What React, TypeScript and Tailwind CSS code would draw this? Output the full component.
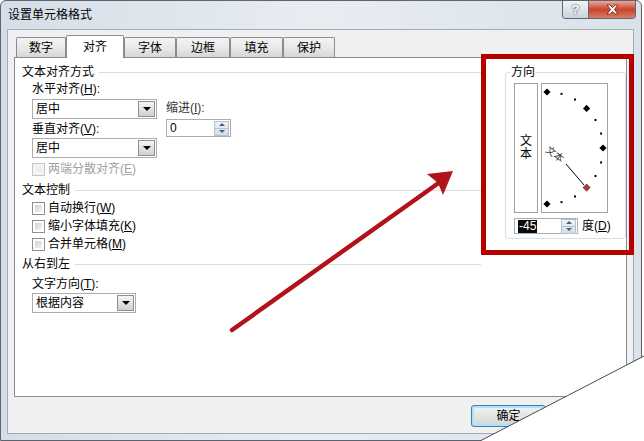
import React from 'react'

const TABS: { label: string; width: string; active?: boolean }[] = [
  { label: '数字', width: 'w-[50px]' },
  { label: '对齐', width: 'w-[58px]', active: true },
  { label: '字体', width: 'w-[52px]' },
  { label: '边框', width: 'w-[54px]' },
  { label: '填充', width: 'w-[53px]' },
  { label: '保护', width: 'w-[52px]' },
]

const DIAL_ANGLES = [90, 75, 60, 45, 30, 15, 0, -15, -30, -45, -60, -75, -90]

function Key({ k }: { k: string }) {
  return (
    <>
      (<span className="underline">{k}</span>)
    </>
  )
}

function GroupHeader({ label, className = '' }: { label: string; className?: string }) {
  return (
    <div className={`flex h-[14px] items-center ${className}`}>
      <span className="leading-[14px]">{label}</span>
      <div className="ml-[5px] h-px flex-1 bg-[#dcdcdc]" />
    </div>
  )
}

function Combo({ value, className = '' }: { value: string; className?: string }) {
  return (
    <div className={`flex h-[20px] items-center border border-[#abadb3] bg-white ${className}`}>
      <span className="flex-1 pl-[3px] leading-[14px]">{value}</span>
      <div className="mr-px flex h-[16px] w-[17px] items-center justify-center border border-[#8e8f8f] bg-gradient-to-b from-[#f6f6f6] to-[#cfcfcf]">
        <div className="h-0 w-0 border-x-[4px] border-t-[4px] border-x-transparent border-t-black" />
      </div>
    </div>
  )
}

function SpinButtons() {
  return (
    <div className="mr-px flex h-[15px] w-[15px] flex-col border border-[#b6c2cf] bg-gradient-to-b from-[#eef3f8] to-[#d3dde8]">
      <div className="flex flex-1 items-center justify-center border-b border-[#b6c2cf]">
        <div className="h-0 w-0 border-x-[3px] border-b-[3px] border-x-transparent border-b-[#4b5f80]" />
      </div>
      <div className="flex flex-1 items-center justify-center">
        <div className="h-0 w-0 border-x-[3px] border-t-[3px] border-x-transparent border-t-[#4b5f80]" />
      </div>
    </div>
  )
}

function CheckBox({ children, disabled }: { children: React.ReactNode; disabled?: boolean }) {
  return (
    <div className="flex h-[18px] items-center">
      <div
        className={`h-[13px] w-[13px] border p-[2px] ${
          disabled ? 'border-[#c5c5c5] bg-[#f4f4f4]' : 'border-[#8e8f8f] bg-white'
        }`}
      >
        <div
          className={`h-full w-full ${
            disabled ? 'bg-[#f0f0f0]' : 'bg-gradient-to-br from-[#cfd2d6] to-[#f4f4f4]'
          }`}
        />
      </div>
      <span className={`ml-[3px] leading-[14px] ${disabled ? 'text-[#a0a0a0]' : ''}`}>{children}</span>
    </div>
  )
}

function Dial() {
  const cx = 5
  const cy = 64
  const r = 56
  return (
    <div className="h-[130px] w-[67px] border border-[#a0a0a0] bg-white">
      <svg width="65" height="128" viewBox="0 0 65 128">
        {DIAL_ANGLES.map((a) => {
          const x = cx + r * Math.cos((a * Math.PI) / 180)
          const y = cy - r * Math.sin((a * Math.PI) / 180)
          if (a % 45 === 0) {
            const s = 3.6
            return (
              <polygon
                key={a}
                points={`${x},${y - s} ${x + s},${y} ${x},${y + s} ${x - s},${y}`}
                fill={a === -45 ? '#b03a3a' : '#000'}
                stroke={a === -45 ? '#5a1010' : 'none'}
                strokeWidth="0.6"
              />
            )
          }
          return <rect key={a} x={x - 1} y={y - 1} width="2" height="2" fill="#000" />
        })}
        <line x1="24" y1="80" x2="42" y2="101" stroke="#000" strokeWidth="1" />
        <text
          x="5"
          y="68"
          fontSize="10"
          fill="#404040"
          transform="rotate(36 5 64)"
          fontFamily="'Noto Sans CJK SC', sans-serif"
        >
          文本
        </text>
      </svg>
    </div>
  )
}

export default function App() {
  return (
    <div className="relative h-[441px] w-[644px] overflow-hidden bg-white font-['Liberation_Sans','Noto_Sans_CJK_SC',sans-serif] text-[12px] text-black">
      {/* window */}
      <div className="flex h-[441px] w-[642px] flex-col rounded-t-[6px] border border-[#5b6470] bg-gradient-to-r from-[#d5dee8] via-[#e8edf2] to-[#d9e1ea]">
        <div className="flex h-[28px] items-start">
          <span className="ml-[7px] mt-[7px] text-[12px] leading-[14px]">设置单元格格式</span>
          <div className="ml-auto mr-[5px] flex h-[18px] overflow-hidden rounded-b-[4px] border border-t-0 border-[#5f6874]">
            <div className="flex w-[26px] items-center justify-center border-r border-[#5f6874] bg-gradient-to-b from-[#f1f4f7] via-[#dfe5eb] to-[#c9d2dc]">
              <span className="text-[13px] font-bold leading-none text-white drop-shadow-[0_0_1px_#2e3640]">?</span>
            </div>
            <div className="flex w-[46px] items-center justify-center bg-gradient-to-b from-[#e9a898] via-[#c8422c] to-[#d87b63]">
              <svg width="13" height="11" viewBox="0 0 13 11">
                <path
                  d="M1 1 L4 1 L6.5 3.6 L9 1 L12 1 L8.3 5.5 L12 10 L9 10 L6.5 7.4 L4 10 L1 10 L4.7 5.5 Z"
                  fill="#fff"
                  stroke="#5a2018"
                  strokeWidth="0.8"
                />
              </svg>
            </div>
          </div>
        </div>

        {/* client area */}
        <div className="ml-[6px] flex h-[405px] w-[627px] flex-col border border-[#a3adb8] bg-[#f0f0f0] px-[6px] pb-[6px] pt-[5px]">
          <div className="relative z-10 -mb-px ml-[2px] flex h-[23px] items-end">
            {TABS.map((t) =>
              t.active ? (
                <div
                  key={t.label}
                  className={`${t.width} flex h-[23px] items-center justify-center rounded-t-[2px] border border-b-0 border-[#898c95] bg-white leading-[14px]`}
                >
                  {t.label}
                </div>
              ) : (
                <div
                  key={t.label}
                  className={`${t.width} mb-px flex h-[20px] items-center justify-center rounded-t-[2px] border border-b-0 border-[#898c95] bg-gradient-to-b from-[#f4f4f4] via-[#e9e9e9] to-[#d6d6d6] leading-[14px]`}
                >
                  {t.label}
                </div>
              ),
            )}
          </div>

          <div className="flex h-[340px] border border-[#898c95] bg-white pl-[7px] pt-[7px]">
            {/* left column */}
            <div className="flex w-[459px] flex-col">
              <GroupHeader label="文本对齐方式" />
              <div className="ml-[10px] mt-[3px] flex">
                <div className="flex w-[125px] flex-col">
                  <span className="leading-[14px]">
                    水平对齐<Key k="H" />:
                  </span>
                  <Combo value="居中" className="mt-[3px]" />
                  <span className="mt-[3px] leading-[14px]">
                    垂直对齐<Key k="V" />:
                  </span>
                  <Combo value="居中" className="mt-[2px]" />
                  <div className="mt-[2px]">
                    <CheckBox disabled>
                      两端分散对齐<Key k="E" />
                    </CheckBox>
                  </div>
                </div>
                <div className="ml-[9px] flex flex-col">
                  <span className="mt-[19px] leading-[14px] text-[#333]">
                    缩进<Key k="I" />:
                  </span>
                  <div className="mt-[4px] flex h-[18px] w-[65px] items-center border border-[#abadb3] bg-white">
                    <span className="flex-1 pl-[3px] leading-[14px]">0</span>
                    <SpinButtons />
                  </div>
                </div>
              </div>

              <GroupHeader label="文本控制" className="mt-[5px]" />
              <div className="ml-[10px] mt-[2px] flex flex-col">
                <CheckBox>
                  自动换行<Key k="W" />
                </CheckBox>
                <CheckBox>
                  缩小字体填充<Key k="K" />
                </CheckBox>
                <CheckBox>
                  合并单元格<Key k="M" />
                </CheckBox>
              </div>

              <GroupHeader label="从右到左" className="mt-[4px]" />
              <div className="ml-[10px] mt-[6px] flex flex-col">
                <span className="leading-[14px]">
                  文字方向<Key k="T" />:
                </span>
                <Combo value="根据内容" className="mt-[2px] w-[104px]" />
              </div>
            </div>

            {/* right column */}
            <fieldset className="ml-[24px] w-[121px] self-start rounded-[3px] border border-[#d5dfe5] pb-[4px] pl-[8px]">
              <legend className="-ml-[4px] px-[1px] leading-[14px]">方向</legend>
              <div className="mt-[4px] flex gap-[3px]">
                <div className="flex h-[130px] w-[24px] flex-col items-center justify-center border border-[#a0a0a0] bg-white leading-[13px]">
                  <span>文</span>
                  <span>本</span>
                </div>
                <Dial />
              </div>
              <div className="mt-[5px] flex items-center">
                <div className="flex h-[16px] w-[64px] items-center border border-[#abadb3] bg-white">
                  <div className="flex flex-1 pl-[3px]">
                    <span className="bg-[#0a0a0a] px-px leading-[13px] text-white">-45</span>
                  </div>
                  <SpinButtons />
                </div>
                <span className="ml-[4px] leading-[14px]">
                  度<Key k="D" />
                </span>
              </div>
            </fieldset>
          </div>

          <div className="mt-[8px] flex h-[22px] justify-end gap-[6px]">
            <div className="flex w-[75px] items-center justify-center rounded-[3px] border border-[#3c7fb1] bg-gradient-to-b from-[#f3f3f3] to-[#d6d6d6] shadow-[inset_0_0_0_2px_#a9e4fb] leading-[14px]">
              确定
            </div>
            <div className="flex w-[75px] items-center justify-center rounded-[3px] border border-[#707070] bg-gradient-to-b from-[#f3f3f3] to-[#d6d6d6] leading-[14px]">
              取消
            </div>
          </div>
        </div>
      </div>

      {/* annotation: red frame around 方向 */}
      <div className="pointer-events-none absolute left-[481px] top-[54px] h-[201px] w-[153px] border-[5px] border-[#b60000]" />

      {/* annotation arrow + page curl */}
      <svg className="pointer-events-none absolute left-0 top-0" width="644" height="441" viewBox="0 0 644 441">
        <line x1="232" y1="330" x2="440" y2="182" stroke="#b0141a" strokeWidth="4.5" strokeLinecap="round" />
        <polygon points="453,171 427,174 438,183 443,195" fill="#b0141a" />
        <polygon points="480,441 644,356 644,441" fill="#fff" />
        <line x1="480" y1="441" x2="644" y2="356" stroke="#4a4a4a" strokeWidth="1" />
      </svg>
    </div>
  )
}
